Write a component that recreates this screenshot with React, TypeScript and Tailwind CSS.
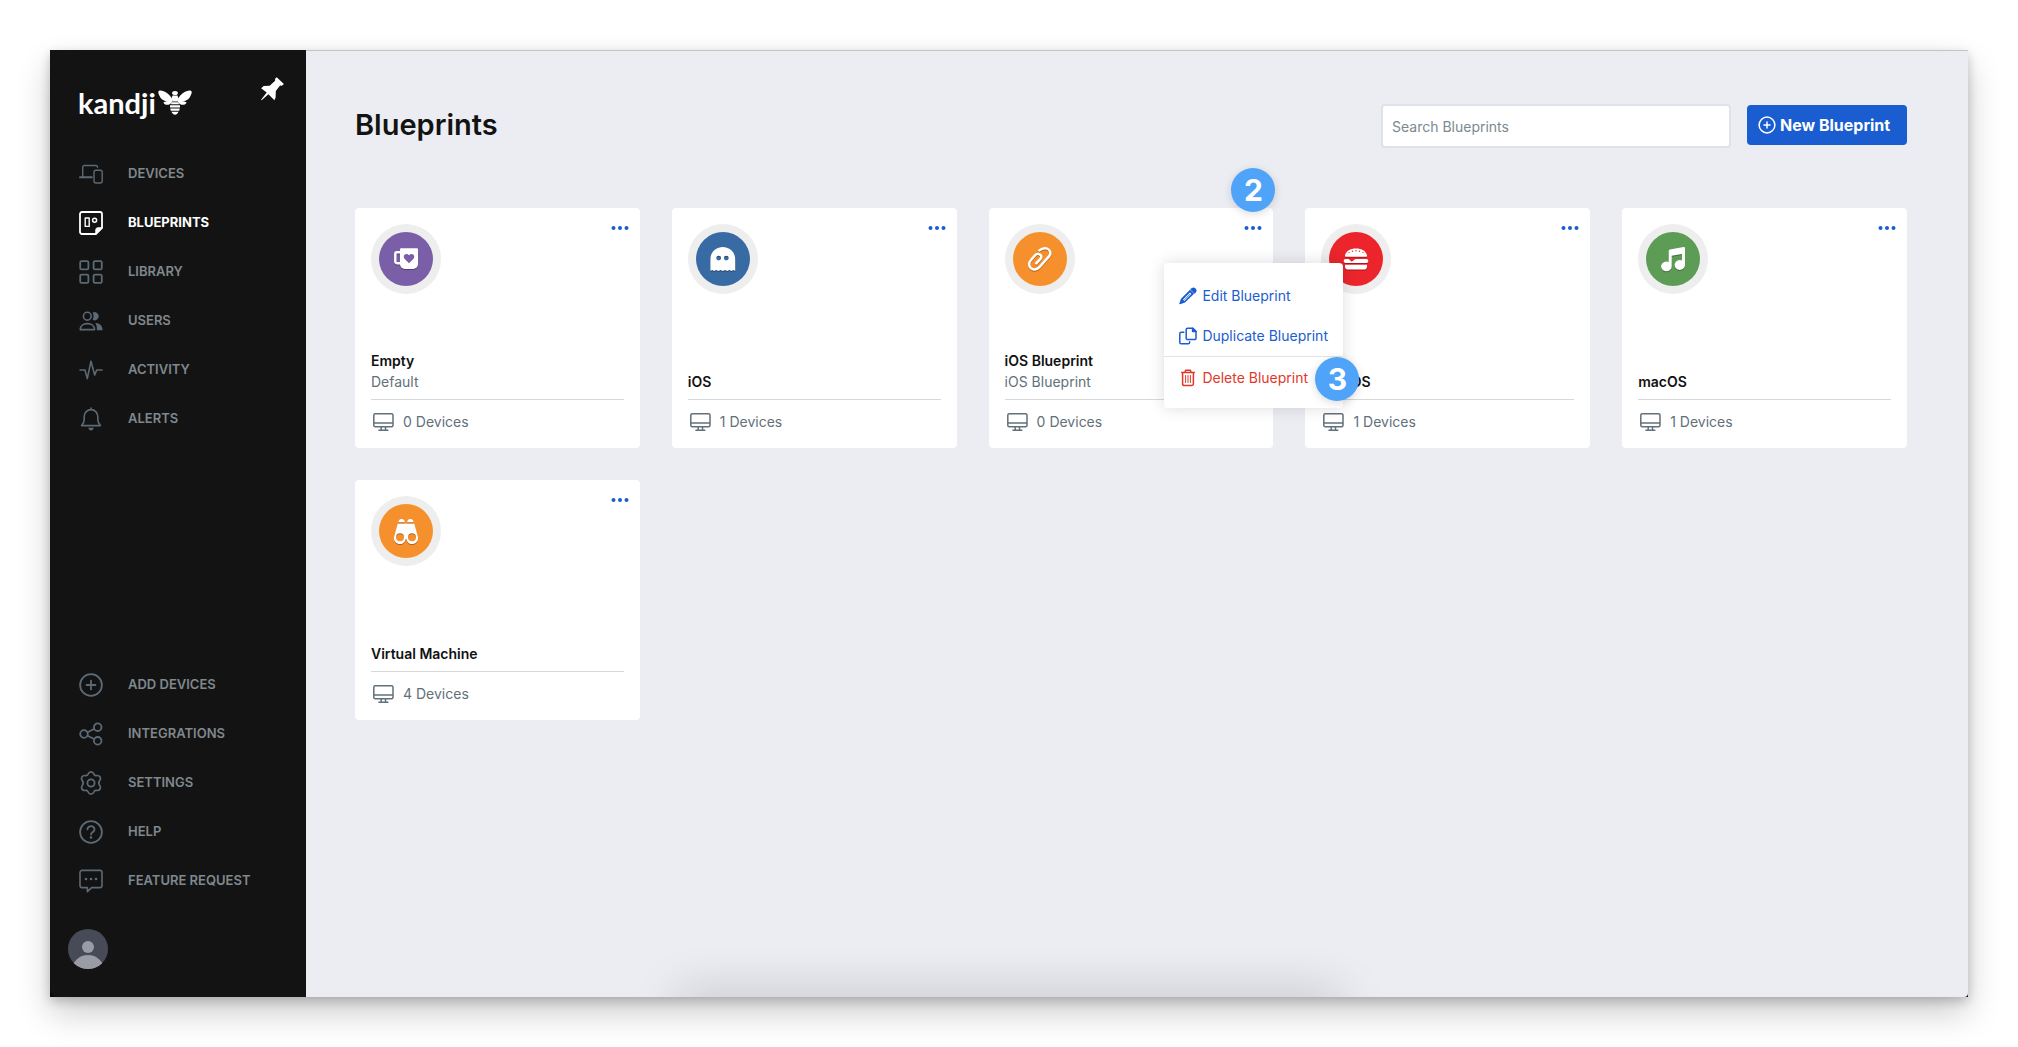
import type { ReactNode } from "react";

/* ---------- Sidebar icons (24 x 24) ---------- */

function Stroke({ children }: { children: ReactNode }) {
  return (
    <svg
      viewBox="0 0 24 24"
      className="size-6 shrink-0"
      fill="none"
      stroke="currentColor"
      strokeWidth="1.8"
      strokeLinecap="round"
      strokeLinejoin="round"
      aria-hidden="true"
    >
      {children}
    </svg>
  );
}

const DevicesIcon = (
  <Stroke>
    <path d="M3.7 14.5V5.2a1.7 1.7 0 0 1 1.7-1.7h11.4a1.7 1.7 0 0 1 1.7 1.7" strokeWidth="1.4" />
    <path d="M1 15.2h11.8" strokeWidth="2" />
    <rect x="15" y="8.2" width="8.2" height="12.8" rx="2" strokeWidth="1.4" />
  </Stroke>
);

const BlueprintsIcon = (
  <Stroke>
    <path d="M3 1h18a2 2 0 0 1 2 2v13.8L16.8 23H3a2 2 0 0 1-2-2V3a2 2 0 0 1 2-2Z" />
    <path d="M16.8 23v-4.2a2 2 0 0 1 2-2H23Z" fill="currentColor" strokeWidth="1" />
    <rect x="6.2" y="7" width="4" height="8.4" strokeWidth="1.4" />
    <circle cx="15.6" cy="9.2" r="2" strokeWidth="1.5" />
  </Stroke>
);

const LibraryIcon = (
  <Stroke>
    <rect x="1.2" y="1.2" width="8.2" height="8.2" rx="1.4" />
    <rect x="14.6" y="1.2" width="8.2" height="8.2" rx="1.4" />
    <rect x="1.2" y="14.6" width="8.2" height="8.2" rx="1.4" />
    <rect x="14.6" y="14.6" width="8.2" height="8.2" rx="1.4" />
  </Stroke>
);

const UsersIcon = (
  <Stroke>
    <circle cx="8.3" cy="7.2" r="3.9" strokeWidth="1.6" />
    <path d="M1.2 20.6c0-3.6 2.8-6 7.2-6s7.2 2.4 7.2 6Z" strokeWidth="1.6" />
    <path
      d="M13.6 3.8a4 4 0 1 1 0 6.9c1.3-2 1.3-4.9 0-6.9ZM16.2 14c4.2-.3 7.4 2.8 7.4 7.3h-5.8c.4-3-.2-5.2-1.6-7.3Z"
      fill="currentColor"
      stroke="none"
    />
  </Stroke>
);

const ActivityIcon = (
  <Stroke>
    <path d="M1 12h5l2.3 8.6L12 3.2l3.7 13.8 2-5h5.4" strokeWidth="1.6" />
  </Stroke>
);

const AlertsIcon = (
  <Stroke>
    <path
      d="M2.6 18.6h18.8c-1.6-1.5-2.6-3.4-2.6-6V9.4a6.8 6.8 0 0 0-13.6 0v3.2c0 2.6-1 4.5-2.6 6ZM12 1v1.400"
      strokeWidth="1.600"
    />
    <path d="M9.2 20.8h5.6c-.5 1.6-1.4 2.6-2.8 2.6s-2.3-1-2.8-2.6Z" fill="currentColor" stroke="none" />
  </Stroke>
);

const AddIcon = (
  <Stroke>
    <circle cx="12" cy="12" r="10.9" />
    <path d="M12 7.6v8.8M7.6 12h8.8" />
  </Stroke>
);

const IntegrationsIcon = (
  <Stroke>
    <circle cx="18.7" cy="5.2" r="3.8" />
    <circle cx="5" cy="12" r="3.8" />
    <circle cx="18.7" cy="18.8" r="3.8" />
    <path d="m8.6 10.2 6.5-3.2M8.6 13.800l6.500 3.200" />
  </Stroke>
);

const SettingsIcon = (
  <Stroke>
    <path
      d="M9 3.300C9.600 1.800 10.500.9 12 .9s2.400.9 3 2.400c.4 1.100 1.300 1.500 2.400 1.300 1.600-.3 2.900.1 3.700 1.400.8 1.300.5 2.500-.5 3.800-.9 1.200-.9 3.200 0 4.400 1 1.300 1.300 2.500.5 3.800-.8 1.300-2.100 1.700-3.700 1.400-1.100-.2-2 .2-2.400 1.300-.6 1.500-1.500 2.400-3 2.400s-2.400-.9-3-2.400c-.4-1.100-1.300-1.500-2.400-1.300-1.600.3-2.900-.1-3.700-1.400-.8-1.300-.5-2.500.5-3.800.9-1.200.9-3.200 0-4.400-1-1.300-1.300-2.500-.5-3.800.8-1.300 2.100-1.700 3.700-1.400 1.100.2 2-.2 2.400-1.300Z"
      strokeWidth="1.700"
    />
    <circle cx="12" cy="12" r="3.600" />
  </Stroke>
);

const HelpIcon = (
  <Stroke>
    <circle cx="12" cy="12" r="10.900" />
    <path d="M8.500 9.300a3.500 3.200 0 1 1 5.700 2.500c-1.300 1-2.200 1.300-2.200 2.700" />
    <circle cx="12" cy="17.500" r="1.300" fill="currentColor" stroke="none" />
  </Stroke>
);

const FeatureIcon = (
  <Stroke>
    <path
      d="M3 1.400h18a2 2 0 0 1 2 2v13.200a2 2 0 0 1-2 2h-8.400L8.400 22.600v-4H3a2 2 0 0 1-2-2V3.400a2 2 0 0 1 2-2Z"
      strokeWidth="1.600"
    />
    <g fill="currentColor" stroke="none">
      <circle cx="7" cy="10" r="1.300" />
      <circle cx="12" cy="10" r="1.300" />
      <circle cx="17" cy="10" r="1.300" />
    </g>
  </Stroke>
);

/* ---------- Brand ---------- */

function Bee() {
  return (
    <svg viewBox="0 0 34 26" className="h-[26px] w-[34px]" fill="#fff" aria-hidden="true">
      <path d="M.8.900C3.400-.4 9 2 12 5.800c1.500 2 2.300 4 2.500 5.900C9.800 12 3.800 10.600 2.200 7.200 1.200 5-.6 2.200.8.900Z" />
      <path d="M33.200.900C30.600-.4 25 2 22 5.800c-1.500 2-2.300 4-2.500 5.900 4.700.3 10.700-1.100 12.300-4.500 1-2.200 2.800-5 1.400-6.300Z" />
      <path d="M14.400 11.200c-3.200-.4-6.800.2-9 1.200 1.200 3.200 6.600 3.600 9-1.200ZM19.600 11.200c3.200-.4 6.800.2 9 1.200-1.200 3.200-6.600 3.600-9-1.200Z" />
      <ellipse cx="17" cy="3" rx="2.900" ry="2" />
      <path d="M14.600 5.600h4.800l1.400 3.200-1.600 2.800h-4.400l-1.600-2.800Z" />
      <path d="M14 12.200h6l1.400 2h-8.800Z" />
      <path d="M12 15.300h10v2.200H12ZM12.200 18.500h9.600l-.6 2.200h-8.400ZM13.400 21.700h7.200c-1 1.900-2.300 3-3.600 3s-2.600-1.100-3.600-3Z" />
    </svg>
  );
}

function PinIcon() {
  return (
    <svg viewBox="0 0 24 24" className="size-6" fill="#fff" aria-hidden="true">
      <path d="m15.700.2 7.200 6.800-2 1.700-1.800-.3-4.300 5.500-.2 6.600-1.200 2.700-6-6L.6 23.200l-.5-.5 5.600-7.100L.1 11.200l2.600-2.200 6-.3 5.400-5V1.700Z" />
    </svg>
  );
}

/* ---------- Blueprint badge glyphs (24 x 24) ---------- */

function Glyph({ children }: { children: ReactNode }) {
  return (
    <svg
      viewBox="0 0 24 24"
      className="size-6 overflow-visible drop-shadow-[0_1px_0_rgba(0,0,0,0.3)]"
      fill="#fff"
      aria-hidden="true"
    >
      {children}
    </svg>
  );
}

const MugGlyph = (
  <Glyph>
    <path d="M7 1.300h16a1 1 0 0 1 1 1V17a5 5 0 0 1-5 5h-8a5 5 0 0 1-5-5V2.300a1 1 0 0 1 1-1Z" />
    <path d="M7 5.200H2.800a1.500 1.500 0 0 0-1.500 1.500v8a1.500 1.500 0 0 0 1.500 1.500H7" fill="none" stroke="#fff" strokeWidth="2.400" />
    <path d="M15 16.300 10.700 12c-1.400-1.500-1.200-3.500.1-4.500 1.300-.9 3-.6 4.200.8 1.200-1.400 2.900-1.700 4.200-.8 1.300 1 1.500 3 .1 4.500Z" fill="#7a5ea8" />
  </Glyph>
);

const GhostGlyph = (
  <Glyph>
    <path
      fillRule="evenodd"
      d="M-.6 24V12.300C-.6 5.200 5 0 11.800 0s12.400 5.200 12.400 12.300V24l-1.500-1-2.300 1-2-1-2.300 1-2-1-2.300 1-2.200-1-2.200 1-2.300-1-2 1-2-1ZM7.700 8.700a2.400 2.400 0 1 0 0 4.800 2.400 2.400 0 0 0 0-4.800Zm7.600 0a2.400 2.400 0 1 0 0 4.800 2.400 2.400 0 0 0 0-4.800Z"
    />
  </Glyph>
);

const ClipGlyph = (
  <Glyph>
    <path
      d="M11.400 3.400c2.300-2 4.600-2.600 7-2 3.800.9 5 5.200 2.600 8L11.400 20.200c-2.400 2.600-6.200 3.300-8.600 1C.4 18.800.8 15.400 3 13l4.200-4.800C8.600 6.700 10.800 6.500 12.200 7.700s1.400 2.800.2 4.200l-4.200 4.500"
      fill="none"
      stroke="#fff"
      strokeWidth="2.500"
      strokeLinecap="round"
    />
  </Glyph>
);

const BurgerGlyph = (
  <Glyph>
    <path d="M2 9.800c-.8 0-1.200-.6-1-1.400C2 4.200 6.400 1.600 12 1.600s10 2.600 11 6.800c.2.8-.2 1.400-1 1.400Z" />
    <path d="M1.600 12h20.800a1.900 1.900 0 0 1 0 3.900H1.600a1.900 1.900 0 0 1 0-3.900Z" />
    <path d="M1 17.700h22v1.500a3.400 3.400 0 0 1-3.400 3.400H4.400A3.400 3.400 0 0 1 1 19.200Z" />
    <path d="m4.600 11.900 3.200 2.900 3.600-2.900Z" fill="#ec252c" />
    <g fill="#ec252c">
      <circle cx="5" cy="5.600" r=".7" />
      <circle cx="8.500" cy="4.200" r=".7" />
      <circle cx="12" cy="3.800" r=".7" />
      <circle cx="15.500" cy="4.200" r=".7" />
      <circle cx="19" cy="5.600" r=".7" />
    </g>
  </Glyph>
);

const MusicGlyph = (
  <Glyph>
    <path d="M7.700 4a1.400 1.400 0 0 1 1.200-1.400L22.600 0A1.200 1.200 0 0 1 24 1.200v16.600a5.200 4.900 0 1 1-3-4.200V7L10.700 8.700v10.600a5.300 4.900 0 1 1-3-4.300Z" />
  </Glyph>
);

const BinocularsGlyph = (
  <Glyph>
    <path d="M4.400 3.200C4.600 1.200 5.800 0 7.600 0s3 1.200 3.300 3.200ZM13.100 3.200c.3-2 1.500-3.200 3.300-3.200s3 1.200 3.200 3.200Z" />
    <path
      fillRule="evenodd"
      d="M3.700 4.800h16.600l3.500 12.600a5.900 5.900 0 1 1-11.500 2.300h-.6A5.900 5.900 0 1 1 .2 17.400ZM6 14.200a4 4 0 1 0 0 8 4 4 0 0 0 0-8Zm12 0a4 4 0 1 0 0 8 4 4 0 0 0 0-8Z"
    />
  </Glyph>
);

/* ---------- Small icons ---------- */

function MonitorIcon() {
  return (
    <svg viewBox="0 0 21 18" className="h-[18px] w-[21px]" fill="none" stroke="currentColor" strokeWidth="1.500" aria-hidden="true">
      <rect x=".8" y=".8" width="19.200" height="13" rx="1.500" />
      <path d="M.8 9.900h19.200M8.200 14v3M12.500 14v3M5.400 17.200h10" />
    </svg>
  );
}

function DotsIcon() {
  return (
    <svg viewBox="0 0 18 4" className="h-1 w-[18px]" fill="currentColor" aria-hidden="true">
      <circle cx="2.500" cy="2" r="2" />
      <circle cx="9" cy="2" r="2" />
      <circle cx="15.500" cy="2" r="2" />
    </svg>
  );
}

function PencilIcon() {
  return (
    <svg viewBox="0 0 18 18" className="size-[18px]" fill="currentColor" aria-hidden="true">
      <path d="M12.600 1.200a3 3 0 0 1 4.200 4.200l-1.300 1.300-4.200-4.200Z" />
      <path
        fillRule="evenodd"
        d="M11 2.800 2 11.700.3 16.600c-.1.400.3.800.7.700l5-1.700 9.100-8.900ZM4 12.600l7-7 1.400 1.400-7 7Z"
      />
      <path d="m5.400 12.800 5.800-5.800" stroke="currentColor" strokeWidth=".8" />
    </svg>
  );
}

function CopyIcon() {
  return (
    <svg viewBox="0 0 18 18" className="size-[18px]" fill="none" stroke="currentColor" strokeWidth="1.500" strokeLinejoin="round" strokeLinecap="round" aria-hidden="true">
      <path d="M8.600 1.200h5.200L17 4.400v6.800a1.400 1.400 0 0 1-1.400 1.400h-7a1.400 1.400 0 0 1-1.400-1.400V2.600a1.400 1.400 0 0 1 1.400-1.400Z" />
      <path d="M13.600 1.200v3.400H17Z" fill="currentColor" />
      <path d="M4.800 5.200H2.200A1.400 1.400 0 0 0 .8 6.600v8.800a1.400 1.400 0 0 0 1.400 1.400h7a1.400 1.400 0 0 0 1.400-1.400v-.6" />
    </svg>
  );
}

function TrashIcon() {
  return (
    <svg viewBox="0 0 18 18" className="size-[18px]" fill="none" stroke="currentColor" strokeWidth="1.500" strokeLinejoin="round" strokeLinecap="round" aria-hidden="true">
      <path d="M2.600 3.500h12.800M6 3.300l.6-2h4.800l.6 2M3.600 3.700v11a1.900 1.900 0 0 0 1.900 1.900h7a1.900 1.900 0 0 0 1.900-1.900v-11" />
      <path d="M6.600 6.500v7M9 6.500v7M11.400 6.500v7" strokeWidth="1" />
    </svg>
  );
}

function PlusCircleIcon() {
  return (
    <svg viewBox="0 0 18 18" className="size-[18px]" fill="none" stroke="currentColor" strokeWidth="1.500" strokeLinecap="round" aria-hidden="true">
      <circle cx="9" cy="9" r="7.900" />
      <path d="M9 6v6M6 9h6" />
    </svg>
  );
}

/* ---------- Sidebar ---------- */

type NavEntry = { label: string; icon: ReactNode; active?: boolean };

const primaryNav: NavEntry[] = [
  { label: "DEVICES", icon: DevicesIcon },
  { label: "BLUEPRINTS", icon: BlueprintsIcon, active: true },
  { label: "LIBRARY", icon: LibraryIcon },
  { label: "USERS", icon: UsersIcon },
  { label: "ACTIVITY", icon: ActivityIcon },
  { label: "ALERTS", icon: AlertsIcon },
];

const secondaryNav: NavEntry[] = [
  { label: "ADD DEVICES", icon: AddIcon },
  { label: "INTEGRATIONS", icon: IntegrationsIcon },
  { label: "SETTINGS", icon: SettingsIcon },
  { label: "HELP", icon: HelpIcon },
  { label: "FEATURE REQUEST", icon: FeatureIcon },
];

function NavList({ items, label }: { items: NavEntry[]; label: string }) {
  return (
    <nav aria-label={label}>
      <ul>
        {items.map((item) => (
          <li key={item.label}>
            <a
              href="#"
              aria-current={item.active ? "page" : undefined}
              className={
                item.active
                  ? "flex h-[49px] items-center gap-[25px] pl-[29px] text-[13px] font-bold text-white"
                  : "flex h-[49px] items-center gap-[25px] pl-[29px] text-[13px] font-semibold text-[#7f888d]"
              }
            >
              <span className={item.active ? "text-white" : "text-[#5c6a76]"}>{item.icon}</span>
              {item.label}
            </a>
          </li>
        ))}
      </ul>
    </nav>
  );
}

function Sidebar() {
  return (
    <aside className="flex w-64 shrink-0 flex-col rounded-bl-lg bg-[#131313] pb-7">
      <div className="flex h-[99px] items-start justify-between pt-[27px] pr-[21px] pl-7">
        <a href="#" aria-label="kandji" className="flex items-center gap-0.5 pt-[11px] text-white">
          <span className="font-['Lato'] text-[29px] leading-[30px] font-bold">kandji</span>
          <Bee />
        </a>
        <button type="button" aria-label="Pin sidebar">
          <PinIcon />
        </button>
      </div>
      <NavList items={primaryNav} label="Main" />
      <div className="mt-auto">
        <NavList items={secondaryNav} label="Support" />
      </div>
      <button type="button" aria-label="Account" className="mt-6 ml-[18px] size-10 overflow-hidden rounded-full">
        <svg viewBox="0 0 40 40" className="size-10" aria-hidden="true">
          <rect width="40" height="40" fill="#474b57" />
          <circle cx="20" cy="18" r="6" fill="#9a9ca5" />
          <ellipse cx="20" cy="41" rx="16" ry="15" fill="#9a9ca5" />
        </svg>
      </button>
    </aside>
  );
}

/* ---------- Blueprint cards ---------- */

type Blueprint = {
  name: string;
  description?: string;
  devices: number;
  color: string;
  glyph: ReactNode;
  menuOpen?: boolean;
};

const blueprints: Blueprint[] = [
  { name: "Empty", description: "Default", devices: 0, color: "bg-[#7a5ea8]", glyph: MugGlyph },
  { name: "iOS", devices: 1, color: "bg-[#386aa4]", glyph: GhostGlyph },
  { name: "iOS Blueprint", description: "iOS Blueprint", devices: 0, color: "bg-[#f6902c]", glyph: ClipGlyph, menuOpen: true },
  { name: "iPadOS", devices: 1, color: "bg-[#ec252c]", glyph: BurgerGlyph },
  { name: "macOS", devices: 1, color: "bg-[#5d9c54]", glyph: MusicGlyph },
  { name: "Virtual Machine", devices: 4, color: "bg-[#f6902c]", glyph: BinocularsGlyph },
];

function StepBadge({ n, place }: { n: number; place: string }) {
  return (
    <span
      className={`absolute flex size-11 items-center justify-center rounded-full bg-[#4fa4f9] text-[30px] leading-none font-bold text-white shadow-[0_2px_8px_rgba(0,0,0,0.15)] ${place}`}
    >
      {n}
    </span>
  );
}

function BlueprintMenu() {
  return (
    <div
      role="menu"
      className="absolute top-[55px] -right-[70px] z-10 w-[179px] rounded bg-white pt-[13px] pb-[10px] text-sm text-[#1a5dd0] shadow-[0_0_16px_rgba(0,0,0,0.14)]"
    >
      <button type="button" role="menuitem" className="flex h-10 w-full items-center gap-[5px] pl-[15px]">
        <PencilIcon />
        Edit Blueprint
      </button>
      <button type="button" role="menuitem" className="flex h-10 w-full items-center gap-[5px] pl-[15px] whitespace-nowrap">
        <CopyIcon />
        Duplicate Blueprint
      </button>
      <button
        type="button"
        role="menuitem"
        className="flex h-[42px] w-full items-center gap-[5px] border-t border-[#e2e3e6] pl-[15px] text-[#e0392b]"
      >
        <TrashIcon />
        Delete Blueprint
      </button>
      <StepBadge n={3} place="top-[94px] -right-4" />
    </div>
  );
}

function BlueprintCard({ name, description, devices, color, glyph, menuOpen }: Blueprint) {
  return (
    <article className="relative flex min-h-60 flex-col rounded bg-white px-4">
      <div className="flex items-start justify-between pt-4">
        <div className="flex size-[70px] items-center justify-center rounded-full bg-[#eeeeee]">
          <div className={`flex size-[54px] items-center justify-center rounded-full ${color}`}>{glyph}</div>
        </div>
        <button type="button" aria-label={`${name} options`} aria-haspopup="menu" aria-expanded={!!menuOpen} className="-mr-[5px] py-0.5 text-[#1a5dd0]">
          <DotsIcon />
        </button>
      </div>
      <div className="mt-auto pb-[7px] text-sm leading-[21px]">
        <h2 className="font-semibold text-[#111111]">{name}</h2>
        {description && <p className="text-[#62707a]">{description}</p>}
      </div>
      <div className="flex h-[49px] items-center gap-[9px] border-t border-[#d6d8da] pb-[5px] pl-0.5 text-sm text-[#62707a]">
        <MonitorIcon />
        {devices} Devices
      </div>
      {menuOpen && (
        <>
          <StepBadge n={2} place="-top-10 -right-0.5" />
          <BlueprintMenu />
        </>
      )}
    </article>
  );
}

export default function App() {
  return (
    <div className="flex min-h-screen bg-white p-[50px] font-['Inter',sans-serif]">
      <div className="relative flex grow bg-[#08090d] shadow-[0_16px_32px_rgba(0,0,0,0.2),0_4px_10px_rgba(0,0,0,0.2)]">
        <Sidebar />
        <main className="grow rounded-br border-t border-[#c4c5c9] bg-[#ecedf2] pt-[53px] pr-[61px] pb-12 pl-[49px]">
          <header className="flex items-start justify-between">
            <h1 className="text-[29px] leading-[42px] font-semibold text-[#131313]">Blueprints</h1>
            <div className="flex items-start gap-4">
              <input
                type="search"
                aria-label="Search Blueprints"
                placeholder="Search Blueprints"
                className="h-11 w-[350px] rounded border-2 border-[#dfe2e8] bg-white px-[9px] text-sm text-[#131313] placeholder:text-[#7d888f]"
              />
              <button type="button" className="mt-px flex h-10 w-40 items-center gap-1 rounded bg-[#195dd0] pl-[11px] text-base font-bold whitespace-nowrap text-white">
                <PlusCircleIcon />
                New Blueprint
              </button>
            </div>
          </header>
          <div className="mt-[60px] grid grid-cols-5 gap-8">
            {blueprints.map((blueprint) => (
              <BlueprintCard key={blueprint.name} {...blueprint} />
            ))}
          </div>
        </main>
        <div className="pointer-events-none absolute inset-x-0 bottom-0 flex h-20 items-end justify-center overflow-hidden">
          <div className="-mb-5 h-5 w-[660px] shadow-[0_0_48px_rgba(0,0,0,0.28)]" />
        </div>
      </div>
    </div>
  );
}
